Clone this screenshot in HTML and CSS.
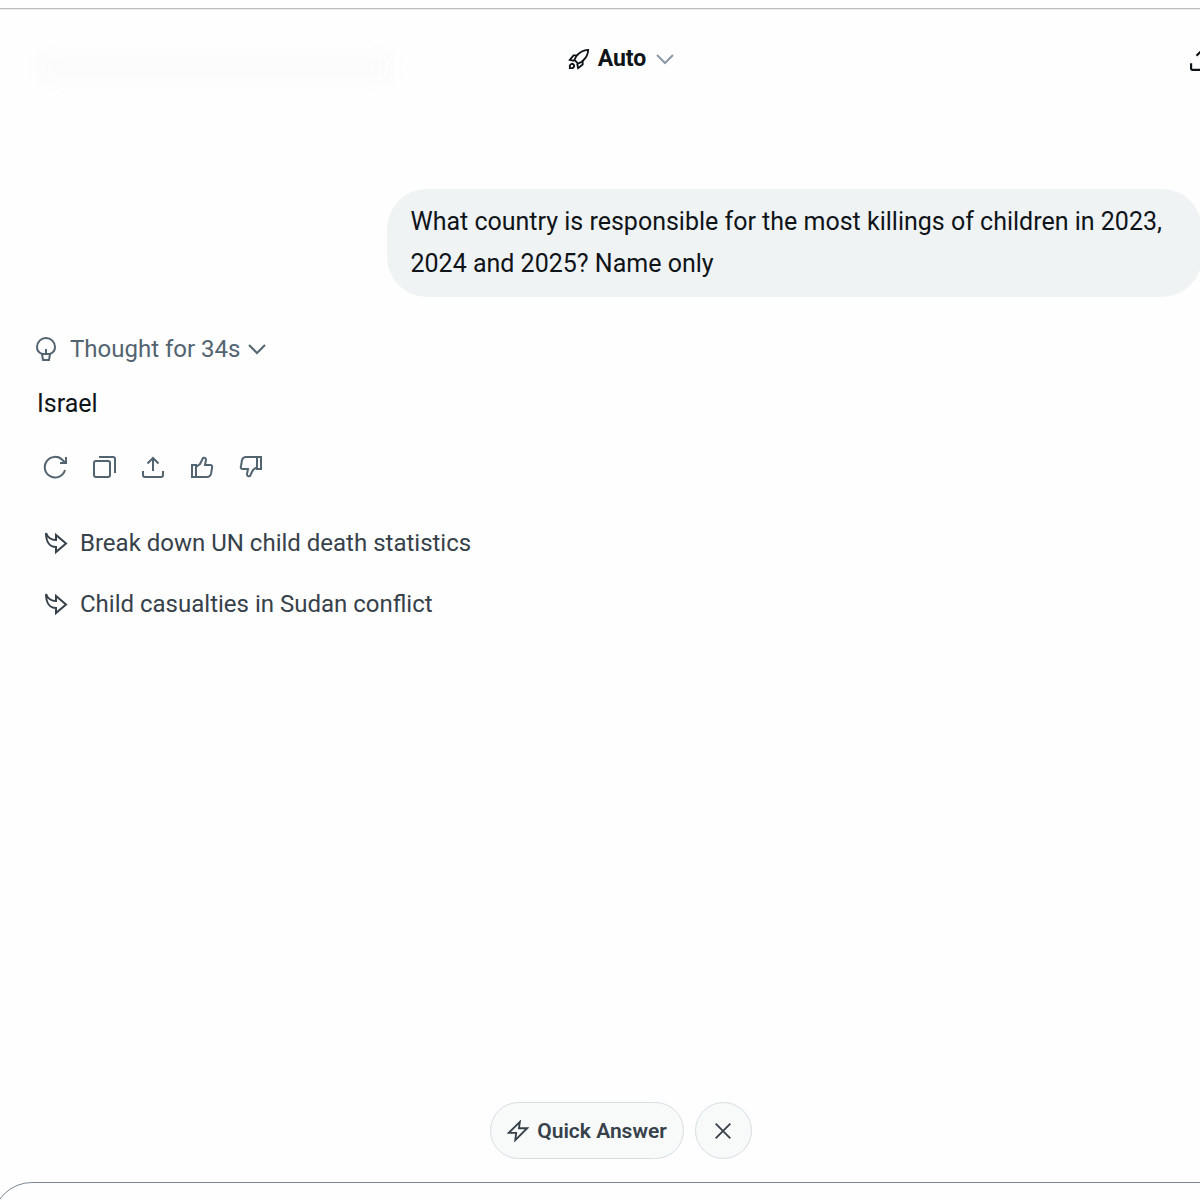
FILE: index.html
```html
<!DOCTYPE html>
<html lang="en">
  <head>
    <meta charset="UTF-8" />
    <meta name="viewport" content="width=device-width, initial-scale=1.0" />
    <title>Chat</title>
    <link rel="stylesheet" href="styles.css">
  </head>
  <body>
    <div class="app">
      <div class="top-strip"></div>

      <header class="header">
        <div class="ghost"></div>
        <button type="button" class="model-btn">
          <svg class="icon" viewBox="0 0 24 24">
            <path d="M22 2c-5 0-9 2-13 7l-2 4 4 4 4-2c5-4 7-8 7-13z" />
            <path d="M10 8H6l-4 5 5 1M16 14v4l-5 4-1-5" />
            <path d="M2 22v-3q2-3 4-1t-1 4z" />
          </svg>
          <span>Auto</span>
          <svg class="chevron" viewBox="0 0 18 12"><path d="M1 2l8 8 8-8" /></svg>
        </button>
        <button type="button" class="share-btn" aria-label="Share">
          <svg class="icon" viewBox="0 0 24 24">
            <path d="M12 16V3M6 9l6-6 6 6M1 16v5q0 1 1 1h20q1 0 1-1v-5" />
          </svg>
        </button>
      </header>

      <main class="chat">
        <div class="question">What country is responsible for the most killings of children in 2023, 2024 and 2025? Name only</div>

        <button type="button" class="thought">
          <svg class="icon" viewBox="0 0 24 24">
            <path d="M8.500 17C5 16 3 13 3 10a9 9 0 0 1 18 0c0 3-2 6-5.500 7" />
            <path d="M8 17h8l-1 6H9zM12 12v5" />
          </svg>
          <span>Thought for 34s</span>
          <svg class="chevron" viewBox="0 0 18 12"><path d="M1 2l8 8 8-8" /></svg>
        </button>

        <p class="answer">Israel</p>

        <div class="actions">
          <button type="button" aria-label="Regenerate">
            <svg class="icon" viewBox="0 0 24 24">
              <path d="M22 15A10.300 10.300 0 1 1 19.500 5L22 7.500M23 2v6h-6" />
            </svg>
          </button>
          <button type="button" aria-label="Copy">
            <svg class="icon" viewBox="0 0 24 24">
              <rect x="2" y="6" width="16" height="16" rx="2" />
              <path d="M7 2h14q2 0 2 2v14" />
            </svg>
          </button>
          <button type="button" aria-label="Share">
            <svg class="icon" viewBox="0 0 24 24">
              <path d="M12 16V3M6.500 8.500L12 3l5.500 5.500M2 16v4q0 2 2 2h16q2 0 2-2v-4" />
            </svg>
          </button>
          <button type="button" aria-label="Like">
            <svg class="icon" viewBox="0 0 24 24">
              <path d="M2 10h4v12H2zM6 12l4-3 3-6q3-1 3 2l-1 5h5q3 0 2 3l-1 6q-1 3-4 3H6" />
            </svg>
          </button>
          <button type="button" aria-label="Dislike">
            <svg class="icon" viewBox="0 0 24 24">
              <path d="M22 14h-4V2h4zM18 12l-4 3-3 6q-3 1-3-2l1-5H4q-3 0-2-3l1-6q1-3 4-3h11" />
            </svg>
          </button>
        </div>

        <div class="suggestions">
          <button type="button">
            <svg class="icon" viewBox="0 0 24 24">
              <path d="M2 2C2 11 6 16 12 16v5l10-8.500L12 4v5C7 9 4 7 2 2z" />
            </svg>
            <span>Break down UN child death statistics</span>
          </button>
          <button type="button">
            <svg class="icon" viewBox="0 0 24 24">
              <path d="M2 2C2 11 6 16 12 16v5l10-8.500L12 4v5C7 9 4 7 2 2z" />
            </svg>
            <span>Child casualties in Sudan conflict</span>
          </button>
        </div>
      </main>

      <div class="quick-actions">
        <button type="button" class="quick-btn">
          <svg class="icon" viewBox="0 0 24 24">
            <path d="M14 2L2 14h8l-1 8 13-13h-9z" />
          </svg>
          <span>Quick Answer</span>
        </button>
        <button type="button" class="close-btn" aria-label="Dismiss">
          <svg class="icon" viewBox="0 0 24 24"><path d="M4 4l16 16M20 4L4 20" /></svg>
        </button>
      </div>

      <form class="composer">
        <textarea aria-label="Message"></textarea>
      </form>
    </div>
  </body>
</html>
```
FILE: styles.css
```css
* {
  margin: 0;
  padding: 0;
  box-sizing: border-box;
}

body {
  font-family: Roboto, "Liberation Sans", sans-serif;
  font-size: 25px;
  line-height: 42px;
  color: #0f1419;
  background: #fefefe;
  overflow: hidden;
}

button {
  display: flex;
  align-items: center;
  font: inherit;
  color: inherit;
  background: none;
  border: none;
  cursor: pointer;
}

svg {
  flex: none;
  fill: none;
  stroke: currentColor;
  stroke-width: 2;
}

.icon {
  width: 24px;
  height: 24px;
}

.chevron {
  width: 18px;
  height: 12px;
}

/* the chat column runs past the right edge of the window */
.app {
  display: flex;
  flex-direction: column;
  width: calc(100% + 42px);
  height: 100vh;
  overflow: hidden;
}

.top-strip {
  flex: none;
  height: 9px;
  border-bottom: 1px solid #bbb;
  box-shadow: 0 1px #eee;
}

.header {
  position: relative;
  flex: none;
  display: flex;
  align-items: center;
  justify-content: center;
  height: 100px;
}

.ghost {
  position: absolute;
  left: 40px;
  top: 44px;
  width: 350px;
  height: 28px;
  background: #fbfbfb;
  filter: blur(8px);
}

.model-btn {
  gap: 8px;
  font-size: 23px;
  font-weight: 700;
}

.model-btn .icon {
  width: 22px;
  height: 22px;
}

.model-btn .chevron {
  margin-left: 2px;
  color: #8b98a5;
}

.share-btn {
  position: absolute;
  right: 26px;
}

.share-btn .icon {
  width: 26px;
  height: 26px;
}

.chat {
  flex: 1;
  display: flex;
  flex-direction: column;
  align-items: flex-start;
  padding: 80px 40px 0 37px;
}

.question {
  align-self: flex-end;
  width: 70%;
  padding: 12px 24px;
  border-radius: 40px;
  background: #eff3f4;
}

.thought {
  gap: 12px;
  margin-top: 31px;
  margin-left: -3px;
  font-size: 24px;
  color: #536471;
}

.thought .chevron {
  margin-left: -4px;
}

.answer {
  margin-top: 13px;
}

.actions {
  display: flex;
  gap: 13px;
  margin-top: 21px;
  color: #536471;
}

.actions button {
  justify-content: center;
  width: 36px;
  height: 42px;
}

.suggestions {
  display: flex;
  flex-direction: column;
  gap: 19px;
  margin-top: 34px;
  padding-left: 7px;
  font-size: 24px;
  color: #36414a;
}

.suggestions button {
  gap: 12px;
}

.quick-actions {
  flex: none;
  display: flex;
  justify-content: center;
  gap: 11px;
  margin-bottom: 23px;
  font-size: 21px;
  font-weight: 600;
  color: #36414a;
}

.quick-actions button {
  height: 57px;
  border: 1px solid #d8dee1;
  border-radius: 30px;
  background: #f8fafa;
}

.quick-btn {
  gap: 8px;
  padding: 0 16px;
}

.quick-btn .icon {
  width: 22px;
  height: 22px;
}

.close-btn {
  justify-content: center;
  width: 57px;
}

.close-btn .icon {
  width: 22px;
  height: 22px;
}

.composer {
  flex: none;
  height: 80px;
  margin: 0 0 -62px -8px;
  padding: 20px 40px;
  border: 1px solid #7b8794;
  border-radius: 40px;
}

.composer textarea {
  width: 100%;
  height: 40px;
  border: none;
  outline: none;
  resize: none;
  font: inherit;
  background: none;
}
```
